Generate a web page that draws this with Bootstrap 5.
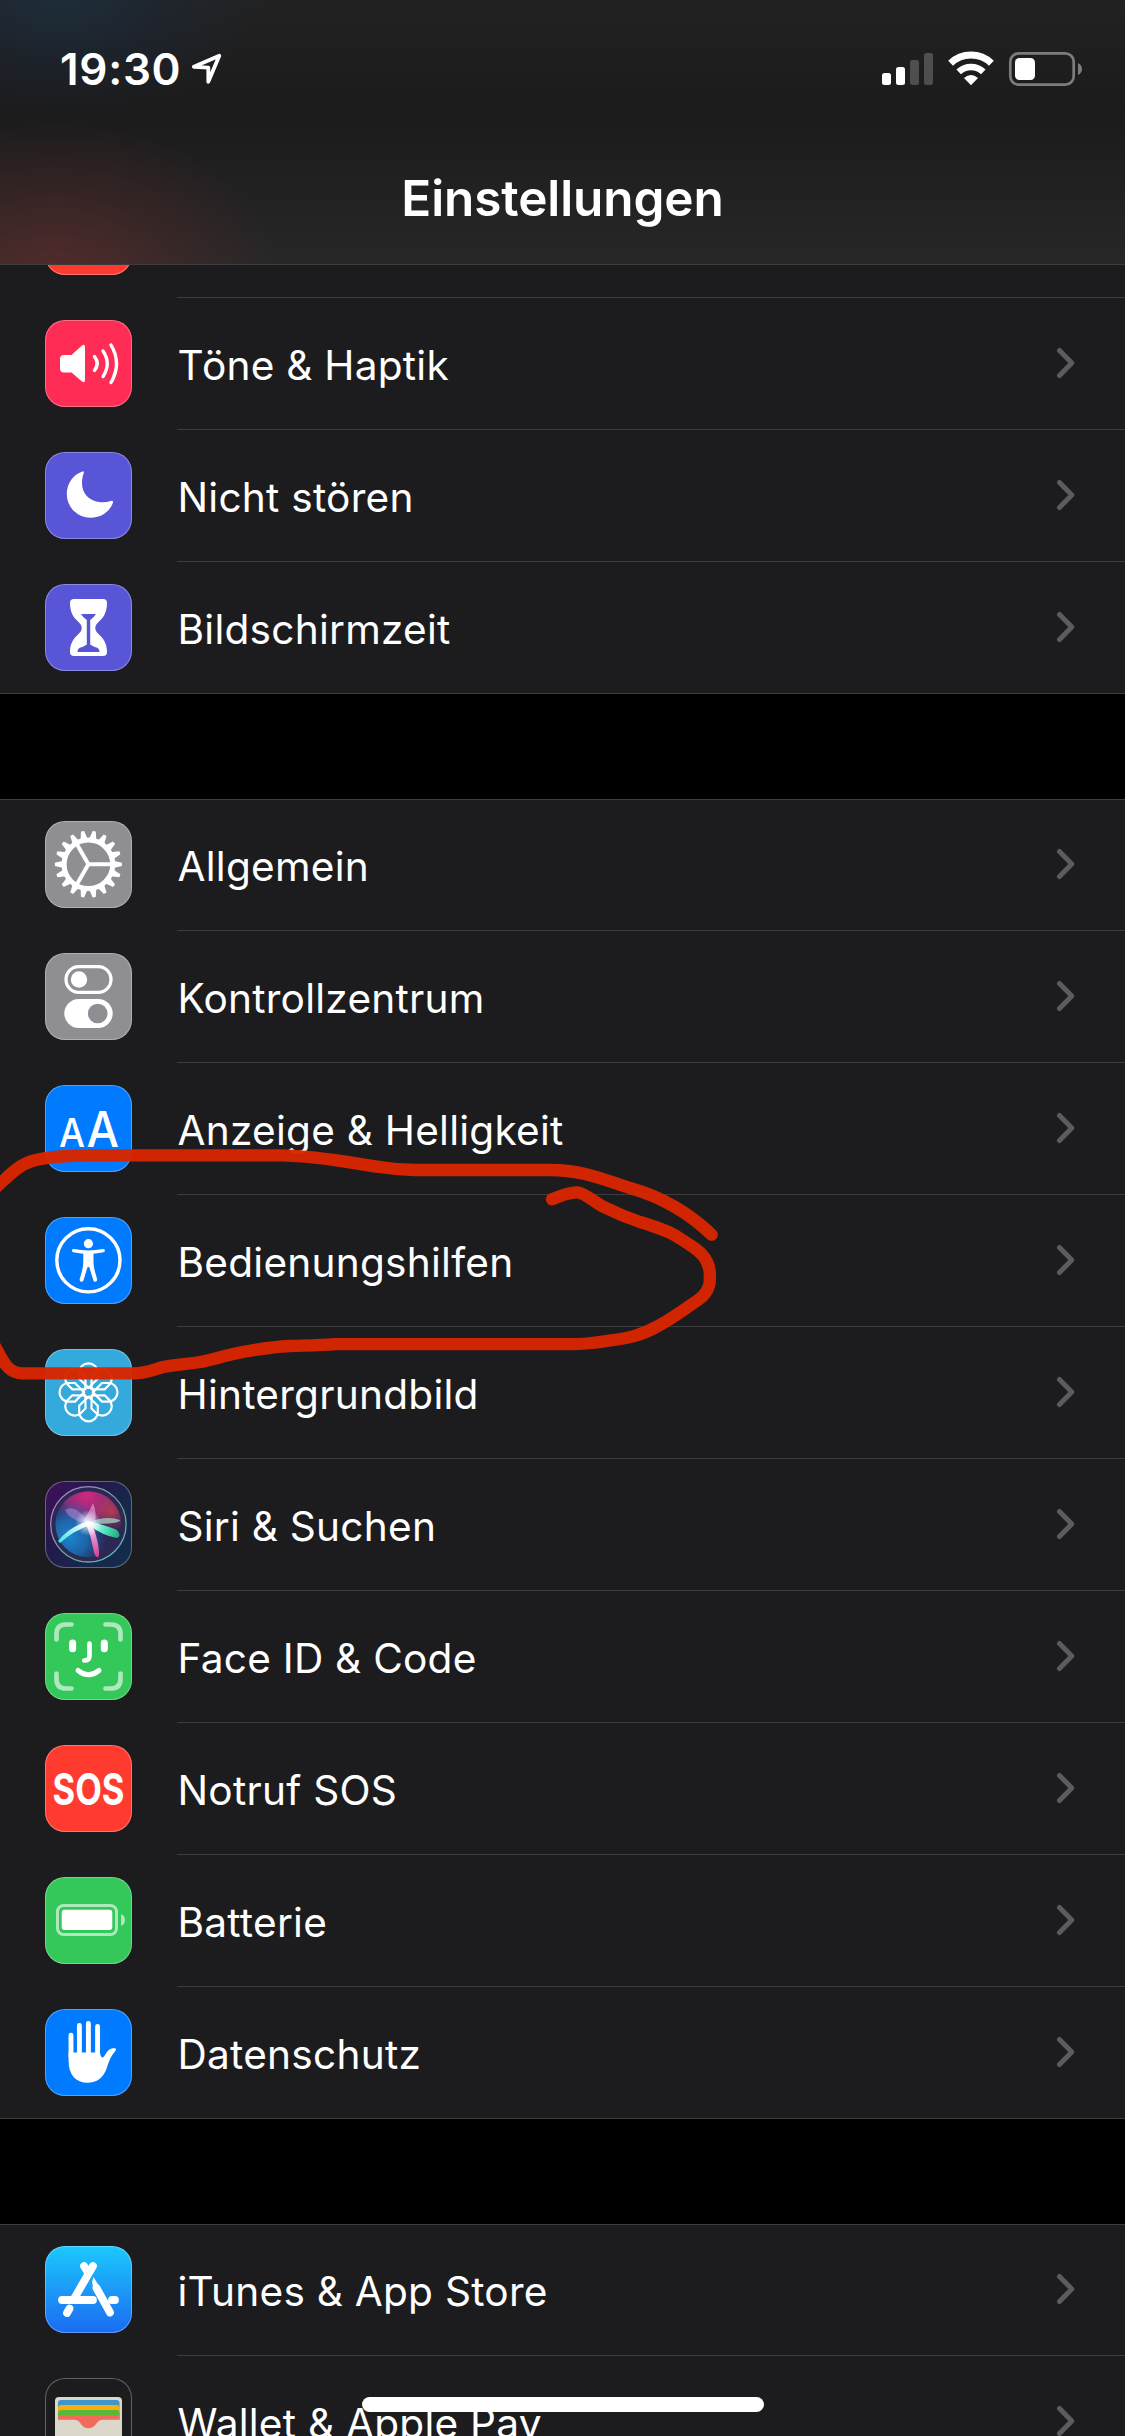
<!DOCTYPE html>
<html lang="de">
<head>
    <meta charset="UTF-8">
    <meta name="viewport" content="width=device-width, initial-scale=1.0">
    <link href="https://cdn.jsdelivr.net/npm/bootstrap@5.3.1/dist/css/bootstrap.min.css" rel="stylesheet">
    <title>Einstellungen</title>
    <style>
        body {
            background: #000;
            color: #fff;
            font-family: Inter, "Liberation Sans", sans-serif;
        }
        .phone {
            width: 1125px;
            height: 2436px;
        }

        /* Kopfbereich */
        .topbar {
            height: 265px;
            border-bottom: 1px solid #3d3d3f;
            background:
                radial-gradient(ellipse 225px 155px at 55px 275px, rgba(130, 48, 45, .48), rgba(120, 45, 42, .25) 50%, transparent),
                radial-gradient(ellipse 200px 115px at 60px 0, rgba(24, 62, 92, .42), rgba(24, 45, 75, .22) 55%, transparent),
                linear-gradient(#222223, #1b1b1c 42%, #272728);
        }
        .statusbar {
            height: 140px;
            padding: 0 42px 0 60px;
        }
        .clock {
            font-size: 44px;
            font-weight: 600;
            line-height: 1;
            letter-spacing: .7px;
            padding-top: 47px;
        }
        .location { margin: 52px 0 0 9px; }
        .signals { margin-top: 49px; }
        .page-title {
            font-size: 49.5px;
            font-weight: 600;
            line-height: 60px;
            padding-top: 28px;
            letter-spacing: -.1px;
        }

        /* Liste */
        .group {
            background: #1c1c1e;
            border-bottom: 1px solid #3d3d3f;
        }
        .group + .group {
            margin-top: 105px;
            border-top: 1px solid #3d3d3f;
        }
        .entry {
            height: 132px;
            padding-left: 45px;
        }
        .group + .group .entry:first-child { height: 130px; }
        .group + .group .entry:first-child .tile { margin-top: 21px; }
        .group + .group .entry:first-child .entry-body { border-top: 0; padding-bottom: 1px; }
        .entry-cut { height: 32px; }
        .entry-cut .tile { margin-top: -77px; }
        .tile {
            width: 87px;
            height: 87px;
            margin: 23px 45px 0 0;
            border-radius: 20px;
            box-shadow: inset 0 0 0 1px rgba(255, 255, 255, .3);
        }
        .entry-body {
            border-top: 1px solid #3d3d3f;
            padding-right: 49px;
        }
        .entry-label {
            font-size: 40.6px;
            line-height: 50px;
            letter-spacing: .25px;
            padding: 4px 0 0 .5px;
        }
        .chevron {
            width: 20px;
            height: 32px;
            margin-bottom: 2px;
        }
        .bg-pink { background: #ff2d55; }
        .bg-violet { background: #5856d6; }
        .bg-gray { background: #8e8e93; }
        .bg-blue { background: #007aff; }
        .bg-sky { background: #34aadc; }
        .bg-green { background: #34c759; }
        .bg-red { background: #ff3b30; }
        .bg-store { background: linear-gradient(#1bc9fd, #1b6bf2); }
        .bg-siri { background: linear-gradient(125deg, #420f5c, #23194d 35%, #16294a 70%, #142c4c); }

        .home-indicator {
            width: 402px;
            height: 15px;
            bottom: 24px;
        }
    </style>
</head>
<body>

<svg width="0" height="0" class="position-absolute">
    <defs>
        <symbol id="chevron" viewBox="0 0 20 32">
            <path d="M3.5 3.5 15.8 16 3.5 28.5" fill="none" stroke="#5b5b60" stroke-width="5" stroke-linecap="round" stroke-linejoin="round"/>
        </symbol>
    </defs>
</svg>

<div class="phone position-relative overflow-hidden">

    <!-- Statusleiste und Titel -->
    <header class="topbar">
        <div class="statusbar d-flex align-items-start">
            <div class="clock">19:30</div>
            <svg class="location" width="32" height="34" viewBox="190 52 32 34">
                <path d="M219.300 55.700 193.800 66.800 208.300 67.600 208.300 81.800z" fill="none" stroke="#fff" stroke-width="3.800" stroke-linejoin="round"/>
            </svg>
            <svg class="signals ms-auto" width="202" height="40" viewBox="881 49 202 40">
                <g fill="#fff">
                    <rect x="882" y="73" width="9" height="12" rx="2.5"/>
                    <rect x="896" y="67" width="9" height="18" rx="2.5"/>
                    <rect x="910" y="60" width="9" height="25" rx="2.5" opacity=".22"/>
                    <rect x="924" y="53" width="9" height="32" rx="2.5" opacity=".22"/>
                </g>
                <path d="M971 85.3l-7-7.4q7-5.6 14 0z" fill="#fff"/>
                <path d="M958.7 71.8a18 18 0 0 1 24.6 0" fill="none" stroke="#fff" stroke-width="6.6"/>
                <path d="M950.6 63.2a29.5 29.5 0 0 1 40.8 0" fill="none" stroke="#fff" stroke-width="7"/>
                <rect x="1010.3" y="53.3" width="63.4" height="31.4" rx="8.5" fill="none" stroke="#7c7c7d" stroke-width="2.7"/>
                <rect x="1015" y="58" width="20" height="22" rx="4.5" fill="#fff"/>
                <path d="M1078 63q4 2 4 6t-4 6z" fill="#7c7c7d"/>
            </svg>
        </div>
        <h1 class="page-title text-center mb-0">Einstellungen</h1>
    </header>

    <main>
        <section class="group">
            <div class="entry entry-cut d-flex overflow-hidden">
                <div class="tile bg-red"></div>
            </div>
            <div class="entry d-flex">
                <div class="tile bg-pink flex-shrink-0">
                    <svg class="d-block" viewBox="0 0 87 87">
                        <path d="M19 35h7.500L37 25.500q3-2 3 1.500v33q0 3.500-3 1.500L26.500 52.500H19q-4 0-4-4v-9.500q0-4 4-4z" fill="#fff"/>
                        <path d="M49.500 36.500q5.500 7 0 14M58 31q8.500 12.500 0 25.500M66 25q11 18.500 0 37.500" fill="none" stroke="#fff" stroke-width="3.400" stroke-linecap="round"/>
                    </svg>
                </div>
                <div class="entry-body d-flex align-items-center flex-grow-1">
                    <span class="entry-label">Töne &amp; Haptik</span>
                    <svg class="chevron ms-auto"><use href="#chevron"/></svg>
                </div>
            </div>
            <div class="entry d-flex">
                <div class="tile bg-violet flex-shrink-0">
                    <svg class="d-block" viewBox="0 0 87 87">
                        <path d="M37.500 19.400C28 22.500 21.800 31.500 21.800 42A23.600 23.600 0 0 0 45.500 65.800C56 65.800 65 59.500 68 50.500Q68.300 48.300 66 49C62 50.300 58 50.600 54 50C43.500 48.500 37 41 37 31C37 27.500 37.600 24 38.800 21Q39.300 19 37.500 19.400z" fill="#fff"/>
                    </svg>
                </div>
                <div class="entry-body d-flex align-items-center flex-grow-1">
                    <span class="entry-label">Nicht stören</span>
                    <svg class="chevron ms-auto"><use href="#chevron"/></svg>
                </div>
            </div>
            <div class="entry d-flex">
                <div class="tile bg-violet flex-shrink-0">
                    <svg class="d-block" viewBox="0 0 87 87">
                        <path d="M29 15h29q4 0 4 4c0 10-4 15-8 18.500-5 4.500-5 8.500 0 13 4 3.500 8 8.500 8 17.500q0 4-4 4H29q-4 0-4-4c0-9 4-14 8-17.500 5-4.500 5-8.500 0-13C29 34 25 29 25 19q0-4 4-4z" fill="#fff"/>
                        <path d="M36 30h15q-2 3.500-5.800 6v24.500q3 2 7.500 3.500 1.800 1 1.800 4h-22q0-3 1.800-4 4.500-1.500 7.500-3.500V36Q38 33.500 36 30z" fill="#5856d6"/>
                    </svg>
                </div>
                <div class="entry-body d-flex align-items-center flex-grow-1">
                    <span class="entry-label">Bildschirmzeit</span>
                    <svg class="chevron ms-auto"><use href="#chevron"/></svg>
                </div>
            </div>
        </section>

        <section class="group">
            <div class="entry d-flex">
                <div class="tile bg-gray flex-shrink-0">
                    <svg class="d-block" viewBox="0 0 87 87">
                        <defs>
                            <path id="teeth" d="M25-3.600l8.500 2v3.200l-8.500 2zM-25-3.600l-8.500 2v3.200l8.500 2z"/>
                        </defs>
                        <g transform="translate(43.400 43.300)" fill="#fff">
                            <circle r="24.300" fill="none" stroke="#fff" stroke-width="5"/>
                            <use href="#teeth"/>
                            <use href="#teeth" transform="rotate(20)"/>
                            <use href="#teeth" transform="rotate(40)"/>
                            <use href="#teeth" transform="rotate(60)"/>
                            <use href="#teeth" transform="rotate(80)"/>
                            <use href="#teeth" transform="rotate(100)"/>
                            <use href="#teeth" transform="rotate(120)"/>
                            <use href="#teeth" transform="rotate(140)"/>
                            <use href="#teeth" transform="rotate(160)"/>
                            <path d="M0 0h24M0 0l-11.500-20M0 0l-11.500 20" stroke="#fff" stroke-width="4"/>
                        </g>
                    </svg>
                </div>
                <div class="entry-body d-flex align-items-center flex-grow-1">
                    <span class="entry-label">Allgemein</span>
                    <svg class="chevron ms-auto"><use href="#chevron"/></svg>
                </div>
            </div>
            <div class="entry d-flex">
                <div class="tile bg-gray flex-shrink-0">
                    <svg class="d-block" viewBox="0 0 87 87">
                        <rect x="21" y="13.700" width="45" height="25.600" rx="12.800" fill="none" stroke="#fff" stroke-width="3.300"/>
                        <circle cx="34" cy="26.500" r="8.200" fill="#fff"/>
                        <rect x="19.300" y="46" width="48.400" height="29" rx="14.500" fill="#fff"/>
                        <circle cx="52.700" cy="60.500" r="9.800" fill="#8e8e93"/>
                    </svg>
                </div>
                <div class="entry-body d-flex align-items-center flex-grow-1">
                    <span class="entry-label">Kontrollzentrum</span>
                    <svg class="chevron ms-auto"><use href="#chevron"/></svg>
                </div>
            </div>
            <div class="entry d-flex">
                <div class="tile bg-blue flex-shrink-0">
                    <svg class="d-block" viewBox="0 0 87 87" fill="#fff" font-weight="500">
                        <text x="14" y="62" font-size="39.500" textLength="26" lengthAdjust="spacingAndGlyphs">A</text>
                        <text x="41.500" y="62" font-size="50" textLength="32.500" lengthAdjust="spacingAndGlyphs">A</text>
                    </svg>
                </div>
                <div class="entry-body d-flex align-items-center flex-grow-1">
                    <span class="entry-label">Anzeige &amp; Helligkeit</span>
                    <svg class="chevron ms-auto"><use href="#chevron"/></svg>
                </div>
            </div>
            <div class="entry d-flex">
                <div class="tile bg-blue flex-shrink-0">
                    <svg class="d-block" viewBox="0 0 87 87">
                        <circle cx="43.400" cy="43.300" r="31.600" fill="none" stroke="#fff" stroke-width="3.400"/>
                        <circle cx="43.400" cy="26.700" r="4.600" fill="#fff"/>
                        <path d="M28.600 33.600q14.800 3 29.600 0" fill="none" stroke="#fff" stroke-width="3.400" stroke-linecap="round"/>
                        <path d="M38.300 34h10.200v10.500q0 5 1.300 9.500l2.400 8.500q0 2.300-2 2.300-1.400 0-1.900-1.600L44.200 50h-1.600l-4.100 13.200q-.5 1.600-1.900 1.600-2 0-2-2.300L37 54q1.300-4.500 1.300-9.500z" fill="#fff"/>
                    </svg>
                </div>
                <div class="entry-body d-flex align-items-center flex-grow-1">
                    <span class="entry-label">Bedienungshilfen</span>
                    <svg class="chevron ms-auto"><use href="#chevron"/></svg>
                </div>
            </div>
            <div class="entry d-flex">
                <div class="tile bg-sky flex-shrink-0">
                    <svg class="d-block" viewBox="0 0 87 87">
                        <defs>
                            <path id="petal" d="M0-4.500L-9.300-13.500V-20a9.300 9 0 0 1 18.600 0V-13.500z"/>
                        </defs>
                        <g transform="translate(43.500 43.300)" fill="none" stroke="#fff" stroke-width="2.200">
                            <use href="#petal"/>
                            <use href="#petal" transform="rotate(45)"/>
                            <use href="#petal" transform="rotate(90)"/>
                            <use href="#petal" transform="rotate(135)"/>
                            <use href="#petal" transform="rotate(180)"/>
                            <use href="#petal" transform="rotate(225)"/>
                            <use href="#petal" transform="rotate(270)"/>
                            <use href="#petal" transform="rotate(315)"/>
                            <circle r="5"/>
                        </g>
                    </svg>
                </div>
                <div class="entry-body d-flex align-items-center flex-grow-1">
                    <span class="entry-label">Hintergrundbild</span>
                    <svg class="chevron ms-auto"><use href="#chevron"/></svg>
                </div>
            </div>
            <div class="entry d-flex">
                <div class="tile bg-siri flex-shrink-0">
                    <svg class="d-block" viewBox="0 0 87 87">
                        <defs>
                            <radialGradient id="siriTop" gradientUnits="userSpaceOnUse" cx="42" cy="14" r="36">
                                <stop offset="0" stop-color="#d4267f"/>
                                <stop offset=".6" stop-color="#a82f86" stop-opacity=".75"/>
                                <stop offset="1" stop-color="#702070" stop-opacity="0"/>
                            </radialGradient>
                            <radialGradient id="siriLeft" gradientUnits="userSpaceOnUse" cx="25" cy="56" r="36">
                                <stop offset="0" stop-color="#1b86cc"/>
                                <stop offset=".5" stop-color="#1a72bc" stop-opacity=".8"/>
                                <stop offset="1" stop-color="#1a5fae" stop-opacity="0"/>
                            </radialGradient>
                            <radialGradient id="siriRight" gradientUnits="userSpaceOnUse" cx="66" cy="30" r="20">
                                <stop offset="0" stop-color="#b83a56"/>
                                <stop offset="1" stop-color="#b83a56" stop-opacity="0"/>
                            </radialGradient>
                            <radialGradient id="siriGlow" gradientUnits="userSpaceOnUse" cx="43" cy="42" r="13">
                                <stop offset="0" stop-color="#fff"/>
                                <stop offset=".3" stop-color="#fff" stop-opacity=".65"/>
                                <stop offset="1" stop-color="#fff" stop-opacity="0"/>
                            </radialGradient>
                            <linearGradient id="siriRing" x1="0" y1="0" x2="1" y2="1">
                                <stop offset="0" stop-color="#c77fd0"/>
                                <stop offset=".6" stop-color="#63a58c"/>
                                <stop offset="1" stop-color="#6db4d4"/>
                            </linearGradient>
                            <linearGradient id="siriBlade" gradientUnits="userSpaceOnUse" x1="13" y1="60" x2="44" y2="42">
                                <stop offset="0" stop-color="#4fdfe8"/>
                                <stop offset="1" stop-color="#fff"/>
                            </linearGradient>
                            <linearGradient id="siriLeaf" gradientUnits="userSpaceOnUse" x1="44" y1="42" x2="74" y2="55">
                                <stop offset="0" stop-color="#fff"/>
                                <stop offset=".5" stop-color="#58e8c8"/>
                                <stop offset="1" stop-color="#1fa878"/>
                            </linearGradient>
                            <linearGradient id="siriDrop" gradientUnits="userSpaceOnUse" x1="43" y1="42" x2="52" y2="76">
                                <stop offset="0" stop-color="#fff"/>
                                <stop offset=".45" stop-color="#e58ccb"/>
                                <stop offset="1" stop-color="#d23f92"/>
                            </linearGradient>
                        </defs>
                        <circle cx="43.400" cy="43.300" r="37.500" fill="#2c2854"/>
                        <circle cx="43.400" cy="43.300" r="33" fill="url(#siriTop)"/>
                        <circle cx="43.400" cy="43.300" r="33" fill="url(#siriLeft)"/>
                        <circle cx="43.400" cy="43.300" r="33" fill="url(#siriRight)"/>
                        <path d="M44 42Q30 22 20 29q4 10 24 14z" fill="#d79fe8" opacity=".4"/>
                        <path d="M44 41Q62 34 75 39q1 4-31 4z" fill="#a9f0dc" opacity=".65"/>
                        <path d="M38 40q6-8 10-18 4 9 2 20z" fill="#eba6e2" opacity=".6"/>
                        <path d="M13 60Q24 46 43 40l2 4Q28 50 15 62z" fill="url(#siriBlade)"/>
                        <path d="M44 40Q62 45 72 49q5 6 0 8Q58 55 44 44z" fill="url(#siriLeaf)"/>
                        <path d="M41 43q5 12 7.500 26 1.500 8.500 5 7Q56 68 47 42z" fill="url(#siriDrop)"/>
                        <circle cx="43" cy="42" r="13" fill="url(#siriGlow)"/>
                        <circle cx="43.400" cy="43.300" r="37.700" fill="none" stroke="url(#siriRing)" stroke-width="1.300"/>
                    </svg>
                </div>
                <div class="entry-body d-flex align-items-center flex-grow-1">
                    <span class="entry-label">Siri &amp; Suchen</span>
                    <svg class="chevron ms-auto"><use href="#chevron"/></svg>
                </div>
            </div>
            <div class="entry d-flex">
                <div class="tile bg-green flex-shrink-0">
                    <svg class="d-block" viewBox="0 0 87 87" fill="none" stroke="#fff" stroke-width="4.700" stroke-linecap="round">
                        <path d="M11.500 26.500V21q0-9.500 9.500-9.500h5.500M60.500 11.500H66q9.500 0 9.500 9.500v5.500M75.500 60.500V66q0 9.500-9.500 9.500h-5.500M26.500 75.500H21q-9.500 0-9.500-9.500v-5.500" opacity=".6"/>
                        <path d="M27.600 30v5.700M59.300 30v5.700" stroke-width="7"/>
                        <path d="M44.500 30.500V43q0 4.500-5.300 4.500"/>
                        <path d="M33 57.500q10.500 8.500 21 0" stroke-width="5"/>
                    </svg>
                </div>
                <div class="entry-body d-flex align-items-center flex-grow-1">
                    <span class="entry-label">Face ID &amp; Code</span>
                    <svg class="chevron ms-auto"><use href="#chevron"/></svg>
                </div>
            </div>
            <div class="entry d-flex">
                <div class="tile bg-red flex-shrink-0">
                    <svg class="d-block overflow-visible" viewBox="0 0 87 87" fill="#fff" font-weight="700">
                        <text x="7.500" y="59.600" font-size="44" textLength="72" lengthAdjust="spacingAndGlyphs">SOS</text>
                    </svg>
                </div>
                <div class="entry-body d-flex align-items-center flex-grow-1">
                    <span class="entry-label">Notruf SOS</span>
                    <svg class="chevron ms-auto"><use href="#chevron"/></svg>
                </div>
            </div>
            <div class="entry d-flex">
                <div class="tile bg-green flex-shrink-0">
                    <svg class="d-block" viewBox="0 0 87 87" fill="#fff">
                        <rect x="12.500" y="28.500" width="59" height="29" rx="6" fill="none" stroke="#fff" stroke-width="3" opacity=".6"/>
                        <rect x="16.700" y="32.700" width="50.600" height="20.400" rx="3"/>
                        <path d="M76 37q4 1.500 4 6t-4 6z" opacity=".6"/>
                    </svg>
                </div>
                <div class="entry-body d-flex align-items-center flex-grow-1">
                    <span class="entry-label">Batterie</span>
                    <svg class="chevron ms-auto"><use href="#chevron"/></svg>
                </div>
            </div>
            <div class="entry d-flex">
                <div class="tile bg-blue flex-shrink-0">
                    <svg class="d-block" viewBox="0 0 87 87">
                        <path d="M26 26.200V48M34.400 16.500V48M43.400 14.500V48M52.600 17.500V48" fill="none" stroke="#fff" stroke-width="4.900" stroke-linecap="round"/>
                        <path d="M23.600 43.500V52C23.600 66 31 73.800 42.500 73.800C52 73.800 58 68.500 61.300 60.500C64 52 66 47 70 42.500Q72.500 39.200 69 39.300C64.500 39.300 62.500 42 60.300 45.500C58 49.500 56.500 49 55.400 46L55 43.500z" fill="#fff"/>
                    </svg>
                </div>
                <div class="entry-body d-flex align-items-center flex-grow-1">
                    <span class="entry-label">Datenschutz</span>
                    <svg class="chevron ms-auto"><use href="#chevron"/></svg>
                </div>
            </div>
        </section>

        <section class="group">
            <div class="entry d-flex">
                <div class="tile bg-store flex-shrink-0">
                    <svg class="d-block" viewBox="0 0 87 87" fill="none" stroke="#fff" stroke-width="7.800" stroke-linecap="round">
                        <path d="M48 20 29.500 52M39 20l4.500 7.500M17 54h31M24.500 62.500l-2.500 4.500M65 66.500 51.500 42M67 54h3"/>
                        <path d="M48.500 31l-1.500 5 2 9 6 9.500 3-8z" fill="#fff" stroke="none"/>
                    </svg>
                </div>
                <div class="entry-body d-flex align-items-center flex-grow-1">
                    <span class="entry-label">iTunes &amp; App Store</span>
                    <svg class="chevron ms-auto"><use href="#chevron"/></svg>
                </div>
            </div>
            <div class="entry d-flex">
                <div class="tile flex-shrink-0">
                    <svg class="d-block" viewBox="0 0 87 87">
                        <path d="M14 19h59q4 0 4 4v64H10V23q0-4 4-4z" fill="#dcd7cb"/>
                        <path d="M13 45V25q0-3 3-3h55.500q3 0 3 3v20z" fill="#4196c8"/>
                        <path d="M13 45V30q0-3 3-3h55.500q3 0 3 3v15z" fill="#f8ae10"/>
                        <path d="M13 45V35q0-3 3-3h55.500q3 0 3 3v10z" fill="#57b935"/>
                        <path d="M13 52V40q0-3 3-3h55.500q3 0 3 3v12z" fill="#f26a5c"/>
                        <path d="M10 41.800h19q4 0 6 3 3.500 5.500 8.500 5.500t8.500-5.500q2-3 6-3h19V87H10z" fill="#dcd7cb"/>
                    </svg>
                </div>
                <div class="entry-body d-flex align-items-center flex-grow-1">
                    <span class="entry-label">Wallet &amp; Apple Pay</span>
                    <svg class="chevron ms-auto"><use href="#chevron"/></svg>
                </div>
            </div>
        </section>
    </main>

    <!-- Rote Markierung um "Bedienungshilfen" -->
    <svg class="position-absolute top-0 start-0 pe-none" width="1125" height="2436" fill="none" stroke="#d82600" stroke-opacity=".97" stroke-width="12.300" stroke-linecap="round" stroke-linejoin="round">
        <path d="M-8 1191C8 1177 18 1165 32 1161C50 1156 70 1155.500 92 1155.300H280C325 1156 355 1164 380 1167C395 1169.500 402 1170 415 1170H550C582 1170 602 1179 630 1188C662 1197 690 1214 711.700 1234.700"/>
        <path d="M552 1199.300C565 1194 572 1192 578 1192.500C585 1193.500 593 1201 604 1207C618 1214 628 1218 640 1222C660 1228 668 1231 676 1236C690 1245 699 1250 704 1257C710 1265 710.500 1273 709.500 1284C708 1291 704 1296 698 1300C685 1309 672 1319 658 1326C640 1336 628 1338 610 1340.500C595 1343 585 1344.200 570 1344.200H335C320 1345.500 305 1345.500 290 1346C270 1347 252 1350 233 1354C220 1357 212 1360 200 1362C188 1364 176 1364.500 163 1367C152 1370 145 1373.300 134 1373.300H22C6 1373 2 1358 -7 1343"/>
    </svg>

    <div class="home-indicator position-absolute start-50 translate-middle-x bg-white rounded-pill"></div>
</div>

<script src="https://cdn.jsdelivr.net/npm/bootstrap@5.3.1/dist/js/bootstrap.bundle.min.js"></script>
</body>
</html>
